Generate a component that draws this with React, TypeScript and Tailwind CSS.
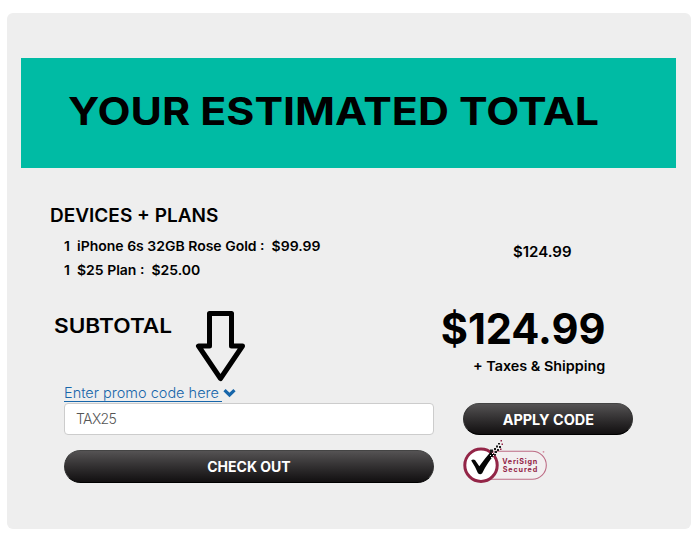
function VeriSignSeal() {
  return (
    <svg width="90" height="46" viewBox="0 0 90 46" className="block">
      <rect x="12" y="11.3" width="71.3" height="28" rx="14" fill="#f2eff0" stroke="#bd6c85" strokeWidth="1.1" />
      <circle cx="18" cy="25.2" r="16.2" fill="#fff" stroke="#932547" strokeWidth="3" />
      <path
        d="M8.200 20.500Q9.800 18.600 12 20l4.300 6.300Q21.500 19 27.500 12l4.200 2.500Q24 23 19.200 33.300q-2 2-4.200 0Q12.500 27 8.200 20.500z"
        fill="#050505"
      />
      <path
        d="M27 9.500h3v3h-3zM31 8h2v2h-2zM31 11h3v2h-3zM34 9h2v2h-2zM33 5.500h2v2h-2zM36 6h2v2h-2zM35 3h2v1.500h-2zM31 14h2v1.500h-2z"
        fill="#1b1b1b"
      />
      <path d="M38.500 3.500H40V5h-1.500zM37.500 0H39v1.500h-1.500zM37 8.500h1.500V10H37z" fill="#932547" />
      <path d="M29 13h1v1h-1zM31 11.500h1v1h-1zM27 15h1v1h-1zM30 15h1v1h-1zM28 17h1v1h-1z" fill="#fff" />
      <circle cx="80.500" cy="11.800" r="0.900" fill="#d58a9f" />
      <g fill="#932547" fontFamily="Inter, sans-serif" fontSize="7.2" fontWeight="700">
        <text x="39.2" y="23.500" textLength="35">VeriSign</text>
        <text x="39.700" y="31.700" textLength="34.500">Secured</text>
      </g>
    </svg>
  );
}

const buttonClass =
  "flex items-center justify-center rounded-full bg-linear-to-b from-[#555354] to-[#121011] border border-t-[#444] border-x-[#333] border-b-black text-[14px] font-bold text-white whitespace-nowrap";

export default function App() {
  return (
    <div className="h-[545px] w-[700px] overflow-hidden bg-white pl-[7px] pt-[13px] font-['Inter',sans-serif] text-black">
      <div className="h-[516px] w-[684px] rounded-md bg-[#eee] pt-[45px]">
        <div className="ml-3.5 flex h-[110px] w-[655px] items-center bg-[#00bba4] pb-1 pl-[46.5px]">
          <h1 className="origin-left scale-x-[1.114] whitespace-nowrap text-[38.5px] font-bold leading-none">
            YOUR ESTIMATED TOTAL
          </h1>
        </div>

        <div className="flex h-[138px] pt-9">
          <div className="w-[506px] pl-[43px]">
            <h2 className="h-[30px] w-fit origin-left scale-x-[1.028] whitespace-nowrap text-[18.5px] font-semibold leading-[22px]">
              DEVICES + PLANS
            </h2>
            <ul className="ml-3.5 w-fit origin-left scale-x-[1.037] text-[13.5px] font-semibold leading-6 whitespace-pre">
              <li>1  iPhone 6s 32GB Rose Gold :  $99.99</li>
              <li>1  $25 Plan :  $25.00</li>
            </ul>
          </div>
          <div className="h-fit w-fit origin-left scale-x-[1.035] pt-[38px] text-[14.5px] font-semibold leading-[20px]">
            $124.99
          </div>
        </div>

        <div className="flex h-[77px]">
          <div className="w-[380px] pl-[47px] pt-2">
            <h2 className="w-fit origin-left scale-x-[1.16] text-[19.5px] font-semibold leading-6">SUBTOTAL</h2>
          </div>
          <div className="flex w-[218px] flex-col items-end whitespace-nowrap">
            <div className="origin-right scale-x-[0.99] pt-px text-[42px] font-bold leading-[44px]">$124.99</div>
            <div className="mt-[5px] origin-right scale-x-[1.065] text-[13.5px] font-semibold leading-5">
              + Taxes &amp; Shipping
            </div>
          </div>
        </div>

        <div className="flex gap-[29px] pl-[57px]">
          <div className="w-[370px]">
            <a className="flex h-5 items-start text-[#1766aa]" href="#promo">
              <span className="mt-0.5 h-[17px] w-[158px] whitespace-nowrap border-b border-[#1766aa] text-[14.5px] font-light leading-4">
                Enter promo code here
              </span>
              <svg className="ml-px mt-[5px]" width="13" height="10" viewBox="0 0 13 10">
                <path d="M1.500 2.200 6.500 7l5-4.800" fill="none" stroke="currentColor" strokeWidth="3.200" />
              </svg>
            </a>
            <input
              className="block h-8 w-full rounded border border-[#ccc] bg-white px-[11px] pb-0.5 text-[14px] font-light tracking-[-0.6px] text-[#555]"
              defaultValue="TAX25"
            />
            <button className={`${buttonClass} mt-[15px] h-[33px] w-full`}>
              <span>CHECK OUT</span>
            </button>
          </div>
          <div className="w-[170px] pt-5">
            <button className={`${buttonClass} h-8 w-full`}>
              <span className="scale-x-[1.03]">APPLY CODE</span>
            </button>
            <div className="pt-[5px]">
              <VeriSignSeal />
            </div>
          </div>
        </div>
      </div>

      <svg className="absolute left-[194px] top-[308px]" width="54" height="76" viewBox="0 0 54 76">
        <path
          d="M15.500 5.500h22v32.500h11L26.500 70.500 4.500 38h11z"
          fill="none"
          stroke="#000"
          strokeWidth="5"
          strokeLinejoin="round"
        />
      </svg>
    </div>
  );
}
